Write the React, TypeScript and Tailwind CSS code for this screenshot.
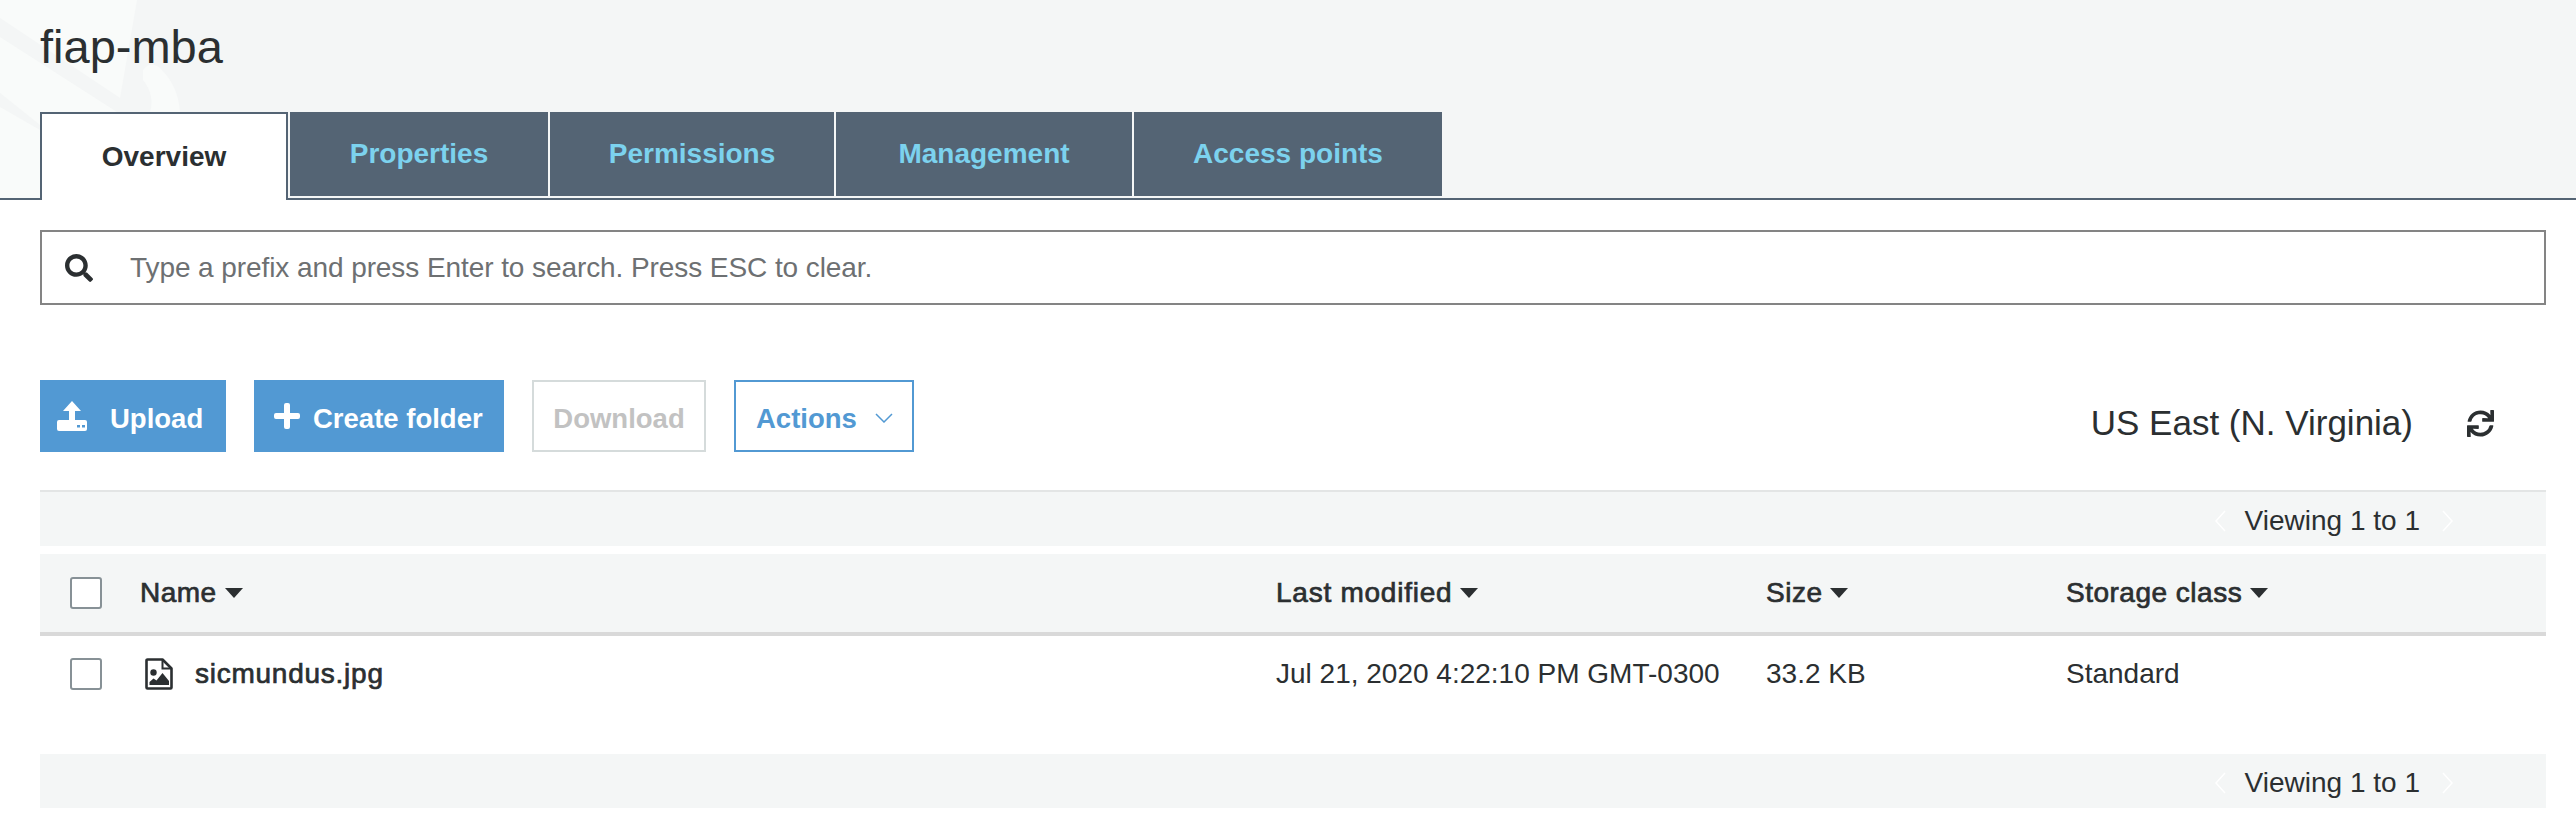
import React from "react";
import { FaSearch, FaSync } from "react-icons/fa";

const tabs = [
  { label: "Properties", width: "w-[260px]" },
  { label: "Permissions", width: "w-[286px]" },
  { label: "Management", width: "w-[298px]" },
  { label: "Access points", width: "w-[308px]" },
];

const cols = "grid-cols-[70px_1136px_490px_300px_1fr]";
// the reference uses a medium weight that Liberation Sans lacks
const medium = "[-webkit-text-stroke:0.7px_#2b2f31]";

function SortArrow() {
  return (
    <svg viewBox="0 0 18 10" className="ml-2 h-[10px] w-[18px] fill-[#2b2f31]">
      <path d="M0 0h18L9 10z" />
    </svg>
  );
}

function Checkbox() {
  return <div className="h-8 w-8 rounded-[3px] border-2 border-[#879196] bg-white" />;
}

function Pager() {
  return (
    <div className="flex items-center pt-1">
      <svg viewBox="0 0 12 24" className="mr-[19px] h-6 w-3 fill-none stroke-white stroke-[1.5]">
        <path d="M11 2 2 12l9 10" />
      </svg>
      <span>Viewing 1 to 1</span>
      <svg viewBox="0 0 12 24" className="ml-[22px] h-6 w-3 fill-none stroke-white stroke-[1.5]">
        <path d="m1 2 9 10-9 10" />
      </svg>
    </div>
  );
}

function UploadIcon() {
  return (
    <svg viewBox="0 0 30 30" className="h-[30px] w-[30px] shrink-0 fill-white">
      <path d="M15 0l9 10h-6v10h-6V10H6z" />
      <path d="M2 19h26a2 2 0 0 1 2 2v7a2 2 0 0 1-2 2H2a2 2 0 0 1-2-2v-7a2 2 0 0 1 2-2z" />
      <rect x="20" y="24" width="3" height="2.5" fill="#5299d3" />
      <rect x="25" y="24" width="3" height="2.5" fill="#5299d3" />
    </svg>
  );
}

function PlusIcon() {
  return (
    <svg viewBox="0 0 26 26" className="h-[26px] w-[26px] shrink-0 fill-white">
      <path d="M10 2a2 2 0 0 1 2-2h2a2 2 0 0 1 2 2v8h8a2 2 0 0 1 2 2v2a2 2 0 0 1-2 2h-8v8a2 2 0 0 1-2 2h-2a2 2 0 0 1-2-2v-8H2a2 2 0 0 1-2-2v-2a2 2 0 0 1 2-2h8z" />
    </svg>
  );
}

function ImageFileIcon() {
  return (
    <svg viewBox="0 0 28 32" className="ml-[5px] h-8 w-7 shrink-0">
      <path d="M2.5 1.5h15l9 9v19a1 1 0 0 1-1 1h-23a1 1 0 0 1-1-1v-27a1 1 0 0 1 1-1z" fill="none" stroke="#2b2f31" strokeWidth="2.6" strokeLinejoin="round" />
      <path d="M17.5 1.5v9h9" fill="none" stroke="#2b2f31" strokeWidth="2" />
      <circle cx="8.5" cy="14.5" r="3.2" fill="#2b2f31" />
      <path d="M4.5 27v-3l4-3.5 3 2 6-7.5 6.500 8v4z" fill="#2b2f31" />
    </svg>
  );
}

export default function App() {
  return (
    <div className="h-[838px] w-full overflow-hidden bg-white font-['Liberation_Sans',sans-serif] text-[28px] text-[#2b2f31]">
      {/* header with the faint console watermark behind it */}
      <div className="relative h-[200px] border-b-2 border-[#546474] bg-[#f4f6f6]">
        <svg viewBox="0 0 190 198" className="absolute left-0 top-0 h-[198px] w-[190px] fill-[#f9fbfa]">
          <path d="M0 0H137L120 98 0 18z" />
          <path d="M0 37 117 112H40v13L0 93z" />
          <path d="M0 107 40 130v68H0z" />
          <path d="M143 70q7-10 17-2 18 17 20 44h-30q5-17-7-32z" />
        </svg>
        <div className="relative flex h-[112px] items-start pl-10 pt-[20px]">
          <h1 className="text-[47px] font-normal leading-[54px] text-[#2b2f31]">fiap-mba</h1>
        </div>
        <div className="relative flex h-[86px] pl-10">
          <div className="z-10 flex h-[88px] w-[248px] items-center justify-center border-x-2 border-t-2 border-[#546474] bg-white font-bold">
            Overview
          </div>
          <div className="ml-[2px] flex h-[84px]">
            {tabs.map((t) => (
              <div
                key={t.label}
                className={`flex items-center justify-center border-r-2 border-[#f4f6f6] bg-[#546474] font-bold text-[#7cd2ee] last:border-r-0 ${t.width}`}
              >
                {t.label}
              </div>
            ))}
          </div>
        </div>
      </div>

      <div className="flex flex-col pl-10 pr-[30px]">
        <div className="mt-[30px] flex h-[75px] items-center border-2 border-[#848484] pl-[23px] text-[#6d7072]">
          <FaSearch className="h-7 w-7 text-[#2b2f31]" />
          <span className="ml-[37px] tracking-[-0.08px]">Type a prefix and press Enter to search. Press ESC to clear.</span>
        </div>

        <div className="mt-[75px] flex h-[72px] items-center text-[27.500px]">
          <div className="flex h-[72px] w-[186px] items-center bg-[#5299d3] pl-[17px] font-bold text-white">
            <UploadIcon />
            <span className="ml-[23px] pt-[6px]">Upload</span>
          </div>
          <div className="ml-7 flex h-[72px] w-[250px] items-center bg-[#5299d3] pl-5 font-bold text-white">
            <PlusIcon />
            <span className="ml-[13px] pt-[6px]">Create folder</span>
          </div>
          <div className="ml-7 flex h-[72px] w-[174px] items-center justify-center border-2 border-[#d5dbdb] pt-[6px] font-bold text-[#c2c2c2]">
            Download
          </div>
          <div className="ml-7 flex h-[72px] w-[180px] items-center border-2 border-[#5299d3] pl-5 font-bold text-[#5299d3]">
            <span className="pt-[6px]">Actions</span>
            <svg viewBox="0 0 18 10" className="ml-[18px] mt-1 h-[10px] w-[18px] fill-none stroke-[#5299d3] stroke-[1.5]">
              <path d="m1 1 8 8 8-8" />
            </svg>
          </div>
          <div className="ml-auto flex items-center pr-[52px] pt-[14px]">
            <span className="text-[35px]">US East (N. Virginia)</span>
            <FaSync className="ml-[54px] h-[27px] w-[27px]" />
          </div>
        </div>

        <div className="mt-[38px] flex h-[56px] items-center justify-end border-t-2 border-[#e3e5e5] bg-[#f4f6f6] pr-[92px]">
          <Pager />
        </div>

        <div className={`mt-2 grid h-[82px] items-center border-b-4 border-[#d9d9d9] bg-[#f4f6f6] pl-[30px] ${cols}`}>
          <Checkbox />
          <div className={`flex items-center tracking-[0.5px] ${medium}`}>Name<SortArrow /></div>
          <div className={`flex items-center tracking-[0.75px] ${medium}`}>Last modified<SortArrow /></div>
          <div className={`flex items-center tracking-[0.5px] ${medium}`}>Size<SortArrow /></div>
          <div className={`flex items-center tracking-[0.5px] ${medium}`}>Storage class<SortArrow /></div>
        </div>

        <div className={`grid h-[118px] items-start pl-[30px] pt-[22px] ${cols}`}>
          <Checkbox />
          <div className="flex h-8 items-center">
            <ImageFileIcon />
            <span className={`ml-[22px] tracking-[0.75px] ${medium}`}>sicmundus.jpg</span>
          </div>
          <div className="flex h-8 items-center">Jul 21, 2020 4:22:10 PM GMT-0300</div>
          <div className="flex h-8 items-center">33.2 KB</div>
          <div className="flex h-8 items-center">Standard</div>
        </div>

        <div className="flex h-[54px] items-center justify-end bg-[#f4f6f6] pr-[92px]">
          <Pager />
        </div>
      </div>
    </div>
  );
}
